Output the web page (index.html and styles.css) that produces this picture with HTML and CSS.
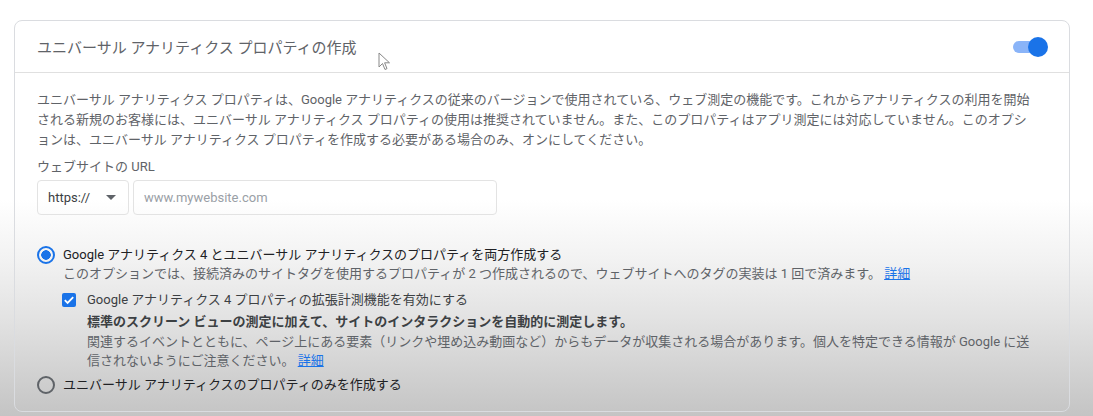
FILE: index.html
```html
<!DOCTYPE html>
<html lang="ja">
<head>
    <meta charset="UTF-8">
    <title>ユニバーサル アナリティクス プロパティの作成</title>
    <link rel="stylesheet" href="styles.css">
</head>
<body>
    <div class="page">
        <div class="card">
            <div class="card-header">
                <h2 class="card-title">ユニバーサル アナリティクス プロパティの作成</h2>
                <div class="toggle on">
                    <span class="toggle-track"></span>
                    <span class="toggle-thumb"></span>
                </div>
                <svg class="cursor" width="14" height="20" viewBox="0 0 14 20">
                    <path d="M1 1 L1 15 L4.5 11.5 L7 17.5 L9 16.6 L6.6 10.8 L11.5 10.8 Z" fill="#fff" stroke="#888" stroke-width="1"/>
                </svg>
            </div>
            <div class="card-body">
                <p class="description">ユニバーサル アナリティクス プロパティは、Google アナリティクスの従来のバージョンで使用されている、ウェブ測定の機能です。これからアナリティクスの利用を開始される新規のお客様には、ユニバーサル アナリティクス プロパティの使用は推奨されていません。また、このプロパティはアプリ測定には対応していません。このオプションは、ユニバーサル アナリティクス プロパティを作成する必要がある場合のみ、オンにしてください。</p>

                <label class="field-label">ウェブサイトの URL</label>
                <div class="url-row">
                    <div class="select">
                        <span>https://</span>
                        <span class="select-arrow"></span>
                    </div>
                    <div class="text-input">www.mywebsite.com</div>
                </div>

                <div class="option">
                    <span class="radio checked"></span>
                    <div class="option-text">
                        <div class="option-label">Google アナリティクス 4 とユニバーサル アナリティクスのプロパティを両方作成する</div>
                        <div class="option-help">このオプションでは、接続済みのサイトタグを使用するプロパティが 2 つ作成されるので、ウェブサイトへのタグの実装は 1 回で済みます。 <a href="#">詳細</a></div>
                    </div>
                </div>

                <div class="sub-option">
                    <span class="checkbox">
                        <svg width="14" height="14" viewBox="0 0 14 14"><path d="M2.8 7.2 L5.6 10 L11.2 4.2" fill="none" stroke="#fff" stroke-width="1.8"/></svg>
                    </span>
                    <div class="option-text">
                        <div class="sub-label">Google アナリティクス 4 プロパティの拡張計測機能を有効にする</div>
                        <div class="sub-strong">標準のスクリーン ビューの測定に加えて、サイトのインタラクションを自動的に測定します。</div>
                        <div class="sub-help">関連するイベントとともに、ページ上にある要素（リンクや埋め込み動画など）からもデータが収集される場合があります。個人を特定できる情報が Google に送信されないようにご注意ください。 <a href="#">詳細</a></div>
                    </div>
                </div>

                <div class="option last">
                    <span class="radio"></span>
                    <div class="option-text">
                        <div class="option-label">ユニバーサル アナリティクスのプロパティのみを作成する</div>
                    </div>
                </div>
            </div>
        </div>
    </div>
</body>
</html>
```

FILE: styles.css
```css
body {
    margin: 0;
    height: 416px;
    overflow: hidden;
    font-family: Roboto, "Noto Sans CJK JP", sans-serif;
    color: #5f6368;
    background: linear-gradient(to bottom, #ffffff 0, #ffffff 200px, #f2f2f2 260px, #e2e2e2 320px, #c4c4c4 416px);
}

.page {
    padding: 20px 23px 0 14px;
}

.card {
    border: 1px solid #dadce0;
    border-radius: 8px;
    height: 390px;
}

.card-header {
    position: relative;
    display: flex;
    justify-content: space-between;
    align-items: center;
    height: 51px;
    padding: 0 21px 0 22px;
    border-bottom: 1px solid #e0e0e0;
}

.card-title {
    margin: 0;
    font-size: 15px;
    font-weight: 400;
    color: #5f6368;
}

.cursor {
    position: absolute;
    left: 363px;
    top: 31px;
}

.toggle {
    position: relative;
    width: 36px;
    height: 20px;
}

.toggle-track {
    position: absolute;
    left: 1px;
    top: 4px;
    width: 30px;
    height: 12px;
    border-radius: 6px;
    background-color: #8ab4f8;
}

.toggle-thumb {
    position: absolute;
    right: 0;
    top: 0;
    width: 20px;
    height: 20px;
    border-radius: 50%;
    background-color: #1a73e8;
}

.card-body {
    padding: 17px 22px 0 22px;
    font-size: 13px;
    line-height: 20px;
}

.description {
    margin: 0;
    width: 1000px;
    line-height: 20px;
}

.field-label {
    display: block;
    margin-top: 7px;
    color: #5f6368;
}

.url-row {
    display: flex;
    gap: 4px;
    margin-top: 3px;
}

.select {
    display: flex;
    align-items: center;
    justify-content: space-between;
    box-sizing: border-box;
    width: 92px;
    height: 35px;
    padding: 0 12px 0 10px;
    border: 1px solid #e3e3e3;
    border-radius: 4px;
    color: #3c4043;
}

.select-arrow {
    width: 0;
    height: 0;
    border-left: 5px solid transparent;
    border-right: 5px solid transparent;
    border-top: 5px solid #5f6368;
}

.text-input {
    box-sizing: border-box;
    width: 364px;
    height: 35px;
    padding: 0 10px;
    line-height: 33px;
    border: 1px solid #e3e3e3;
    border-radius: 4px;
    color: #9aa0a6;
}

.option {
    display: flex;
    gap: 8px;
    margin-top: 30px;
}

.option.last {
    margin-top: 5px;
}

.radio {
    flex: none;
    box-sizing: border-box;
    width: 18px;
    height: 18px;
    margin-top: 1px;
    border: 2px solid #5f6368;
    border-radius: 50%;
}

.radio.checked {
    border-color: #1a73e8;
    background: radial-gradient(circle, #1a73e8 0, #1a73e8 4.5px, transparent 5px);
}

.option-label {
    color: #202124;
}

.option-help {
    line-height: 18px;
}

a {
    color: #1a73e8;
}

.sub-option {
    display: flex;
    gap: 11px;
    margin-top: 7px;
    padding-left: 25px;
}

.checkbox {
    flex: none;
    width: 14px;
    height: 14px;
    margin-top: 3px;
    border-radius: 2px;
    background-color: #1a73e8;
}

.checkbox svg {
    display: block;
}

.sub-label {
    color: #3c4043;
}

.sub-strong {
    margin-top: 2px;
    font-weight: 700;
    color: #3c4043;
}

.sub-help {
    line-height: 19px;
    width: 955px;
}
```
